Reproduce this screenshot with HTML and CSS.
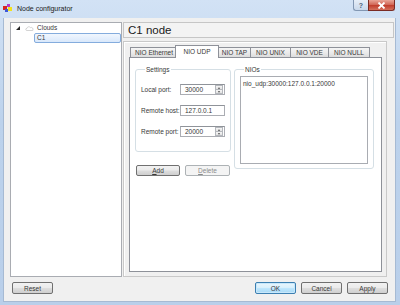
FILE: index.html
```html
<!DOCTYPE html>
<html lang="en">

<head>
    <meta charset="UTF-8">
    <title>Node configurator</title>
    <link rel="stylesheet" href="styles.css">
</head>

<body>
    <div class="window">
        <div class="titlebar">
            <svg class="app-icon" width="10" height="9" viewBox="0 0 10 9">
                <rect x="4" y="0" width="3" height="3" fill="#b33cc7" />
                <rect x="0" y="2" width="4" height="4" fill="#d8261f" />
                <rect x="5" y="3" width="4" height="4" fill="#f3e21b" />
                <rect x="2" y="5" width="3" height="3" fill="#3b57d9" />
            </svg>
            <span class="title">Node configurator</span>
            <div class="controls">
                <div class="ctl help">?</div>
                <div class="ctl close">
                    <svg width="9" height="7" viewBox="0 0 9 7">
                        <path d="M1.5 0.5 L7.5 6.5 M7.5 0.5 L1.5 6.5" stroke="#fff" stroke-width="1.8" />
                    </svg>
                </div>
            </div>
        </div>

        <div class="client">
            <div class="main">
                <div class="tree">
                    <div class="tree-row">
                        <svg class="arrow" width="4" height="4" viewBox="0 0 4 4">
                            <polygon points="4,0 4,4 0,4" fill="#262626" />
                        </svg>
                        <svg class="cloud" width="9" height="5" viewBox="0 0 9 5">
                            <path d="M2 4.5 C0.3 4.5 0.3 2.3 2 2.3 C2.2 0.6 4.6 0.2 5.3 1.6 C6.8 0.9 8.4 2.2 7.6 3.2 C8.8 3.6 8.4 4.5 7.3 4.5 Z"
                                fill="#fff" stroke="#c9c9c9" stroke-width="0.8" />
                        </svg>
                        <span>Clouds</span>
                    </div>
                    <div class="tree-row child">
                        <span class="selected">C1</span>
                    </div>
                </div>

                <div class="side">
                    <div class="header">C1 node</div>
                    <div class="frame">
                        <div class="tabs">
                            <div class="tab w-eth">NIO Ethernet</div>
                            <div class="tab active">NIO UDP</div>
                            <div class="tab w-tap">NIO TAP</div>
                            <div class="tab w-unix">NIO UNIX</div>
                            <div class="tab w-vde">NIO VDE</div>
                            <div class="tab w-null">NIO NULL</div>
                        </div>
                        <div class="panel">
                            <div class="settings-col">
                                <fieldset class="group settings">
                                    <legend>Settings</legend>
                                    <div class="form">
                                        <label>Local port:</label>
                                        <div class="field spin">
                                            <span>30000</span>
                                            <div class="spin-btns"><i class="up"></i><i class="down"></i></div>
                                        </div>
                                        <label>Remote host:</label>
                                        <div class="field"><span>127.0.0.1</span></div>
                                        <label>Remote port:</label>
                                        <div class="field spin">
                                            <span>20000</span>
                                            <div class="spin-btns"><i class="up"></i><i class="down"></i></div>
                                        </div>
                                    </div>
                                </fieldset>
                                <div class="btn-row">
                                    <button class="btn small"><u>A</u>dd</button>
                                    <button class="btn small disabled"><u>D</u>elete</button>
                                </div>
                            </div>
                            <fieldset class="group nios">
                                <legend>NIOs</legend>
                                <div class="list">nio_udp:30000:127.0.0.1:20000</div>
                            </fieldset>
                        </div>
                    </div>
                </div>
            </div>

            <div class="footer">
                <button class="btn">Reset</button>
                <div class="spacer"></div>
                <button class="btn default">OK</button>
                <button class="btn">Cancel</button>
                <button class="btn">Apply</button>
            </div>
        </div>
    </div>
</body>

</html>
```

FILE: styles.css
```css
body {
    margin: 0;
    font-family: "Liberation Sans", Arial, sans-serif;
    font-size: 6.5px;
    color: #383838;
}

.window {
    width: 400px;
    height: 305px;
    display: flex;
    flex-direction: column;
    background: linear-gradient(#d2e2f5, #bcd2ec 40%, #b9cfea);
    overflow: hidden;
}

.titlebar {
    height: 18px;
    display: flex;
    align-items: flex-start;
    flex-shrink: 0;
}

.app-icon {
    margin: 4px 0 0 3px;
}

.title {
    margin: 5px 0 0 4px;
    font-size: 7px;
    line-height: 7px;
    color: #1a1a1a;
}

.controls {
    margin-left: auto;
    margin-right: 5px;
    display: flex;
}

.ctl {
    height: 11px;
    box-sizing: border-box;
    display: flex;
    align-items: center;
    justify-content: center;
    border: 1px solid #8297b3;
    border-top: none;
}

.help {
    width: 15px;
    border-radius: 0 0 0 3px;
    border-right: none;
    background: linear-gradient(#e6eef8, #c9d8eb);
    color: #4c5f7a;
    font-size: 7px;
    font-weight: bold;
}

.close {
    width: 27px;
    border-color: #7a2b24;
    border-radius: 0 0 3px 0;
    background: linear-gradient(#e9a597, #d26a5a 45%, #c13f2e 55%, #d4705c);
}

.client {
    flex: 1;
    margin: 0 4px 4px 3px;
    border: 1px solid #a6bad3;
    border-top: none;
    background: #f0f0f0;
    padding: 4px 1px 7px 6px;
    display: flex;
    flex-direction: column;
}

.main {
    height: 255px;
    display: flex;
    gap: 1px;
}

.tree {
    width: 112px;
    box-sizing: border-box;
    border: 1px solid #a9acb2;
    background: #fff;
}

.tree-row {
    height: 10px;
    display: flex;
    align-items: center;
    padding-left: 5px;
    line-height: 8px;
}

.arrow {
    margin-right: 5px;
}

.cloud {
    margin-right: 3px;
}

.tree-row.child {
    padding-left: 23px;
}

.selected {
    flex: 1;
    height: 10px;
    box-sizing: border-box;
    border: 1px solid #84acdd;
    border-radius: 2px;
    background: linear-gradient(#f1f7fe, #d9e8fb);
    padding-left: 2px;
    line-height: 8px;
}

.side {
    flex: 1;
    display: flex;
    flex-direction: column;
}

.header {
    height: 16px;
    box-sizing: border-box;
    border: 1px solid #c6c6c6;
    background: #f3f3f3;
    font-size: 11.5px;
    line-height: 14px;
    padding-left: 4px;
    color: #1a1a1a;
    margin-bottom: 3px;
}

.frame {
    flex: 1;
    margin-right: 7px;
    border: 1px solid #c9c9c9;
    box-shadow: inset 1px 1px 0 #fff;
    padding: 3px 4px 4px 5px;
    display: flex;
    flex-direction: column;
}

.tabs {
    height: 12px;
    display: flex;
    align-items: flex-end;
    padding-left: 1px;
}

.tab {
    height: 9px;
    border: 1px solid #8e9199;
    border-bottom: none;
    margin-right: -1px;
    background: linear-gradient(#f5f5f5, #ebebeb 50%, #dcdcdc);
    text-align: center;
    line-height: 9px;
}

.w-eth { width: 46px; }
.w-tap { width: 31px; }
.w-unix { width: 39px; }
.w-vde { width: 37px; }
.w-null { width: 40px; }

.tab.active {
    width: 42px;
    height: 12px;
    margin: 0 -1px -1px -2px;
    background: #fff;
    position: relative;
    z-index: 1;
    line-height: 11px;
}

.panel {
    flex: 1;
    border: 1px solid #8e9199;
    background: #fff;
    padding: 8px 5px 0 5px;
    display: flex;
    align-items: flex-start;
    gap: 3px;
}

.group {
    margin: 0;
    border: 1px solid #d5dfe5;
    border-radius: 3px;
    padding: 0;
    min-width: 0;
    box-sizing: border-box;
}

.group legend {
    padding: 0 1px;
    margin-left: 4px;
    line-height: 7px;
}

.settings {
    width: 96px;
    padding: 11px 5px 14px 5px;
}

.form {
    display: grid;
    grid-template-columns: 39px 45px;
    grid-auto-rows: 11px;
    row-gap: 10px;
    align-items: center;
}

.field {
    height: 11px;
    box-sizing: border-box;
    border: 1px solid #abadb3;
    border-top-color: #8f9399;
    background: #fff;
    display: flex;
    align-items: center;
    padding-left: 4px;
    line-height: 8px;
}

.spin {
    padding-right: 1px;
}

.spin-btns {
    margin-left: auto;
    width: 8px;
    height: 9px;
    display: flex;
    flex-direction: column;
}

.spin-btns i {
    flex: 1;
    border: 1px solid #b4b7bc;
    background: linear-gradient(#f6f6f6, #e2e2e2);
    display: flex;
    align-items: center;
    justify-content: center;
}

.spin-btns i.down {
    border-top: none;
}

.spin-btns i::after {
    content: "";
    border-left: 1.5px solid transparent;
    border-right: 1.5px solid transparent;
}

.spin-btns i.up::after {
    border-bottom: 2px solid #555;
}

.spin-btns i.down::after {
    border-top: 2px solid #555;
}

.btn-row {
    display: flex;
    gap: 5px;
    margin-top: 13px;
    padding-left: 1px;
}

.btn {
    width: 41px;
    height: 12px;
    padding: 0;
    box-sizing: border-box;
    border: 1px solid #707070;
    border-radius: 2px;
    background: linear-gradient(#f2f2f2, #ebebeb 45%, #dddddd 55%, #cfcfcf);
    font-family: inherit;
    font-size: 6.5px;
    line-height: 9px;
    color: #383838;
}

.btn.small {
    width: 44px;
    height: 11px;
}

.btn.small.disabled {
    width: 45px;
}

.btn.disabled {
    border-color: #adb2b5;
    background: #f4f4f4;
    color: #8a8a8a;
}

.btn.default {
    border-color: #3c7fb1;
    background: linear-gradient(#eaf6fd, #d9f0fc 45%, #bee6fd 55%, #a7d9f5);
    box-shadow: inset 0 0 0 1px #c8e8fb;
}

.nios {
    width: 140px;
    padding: 3px 5px 4px 5px;
}

.list {
    height: 88px;
    box-sizing: border-box;
    border: 1px solid #a9acb2;
    background: #fff;
    padding: 3px 2px;
    line-height: 8px;
}

.footer {
    display: flex;
    gap: 5px;
    margin: 5px 6px 0 2px;
}

.spacer {
    flex: 1;
}
```
